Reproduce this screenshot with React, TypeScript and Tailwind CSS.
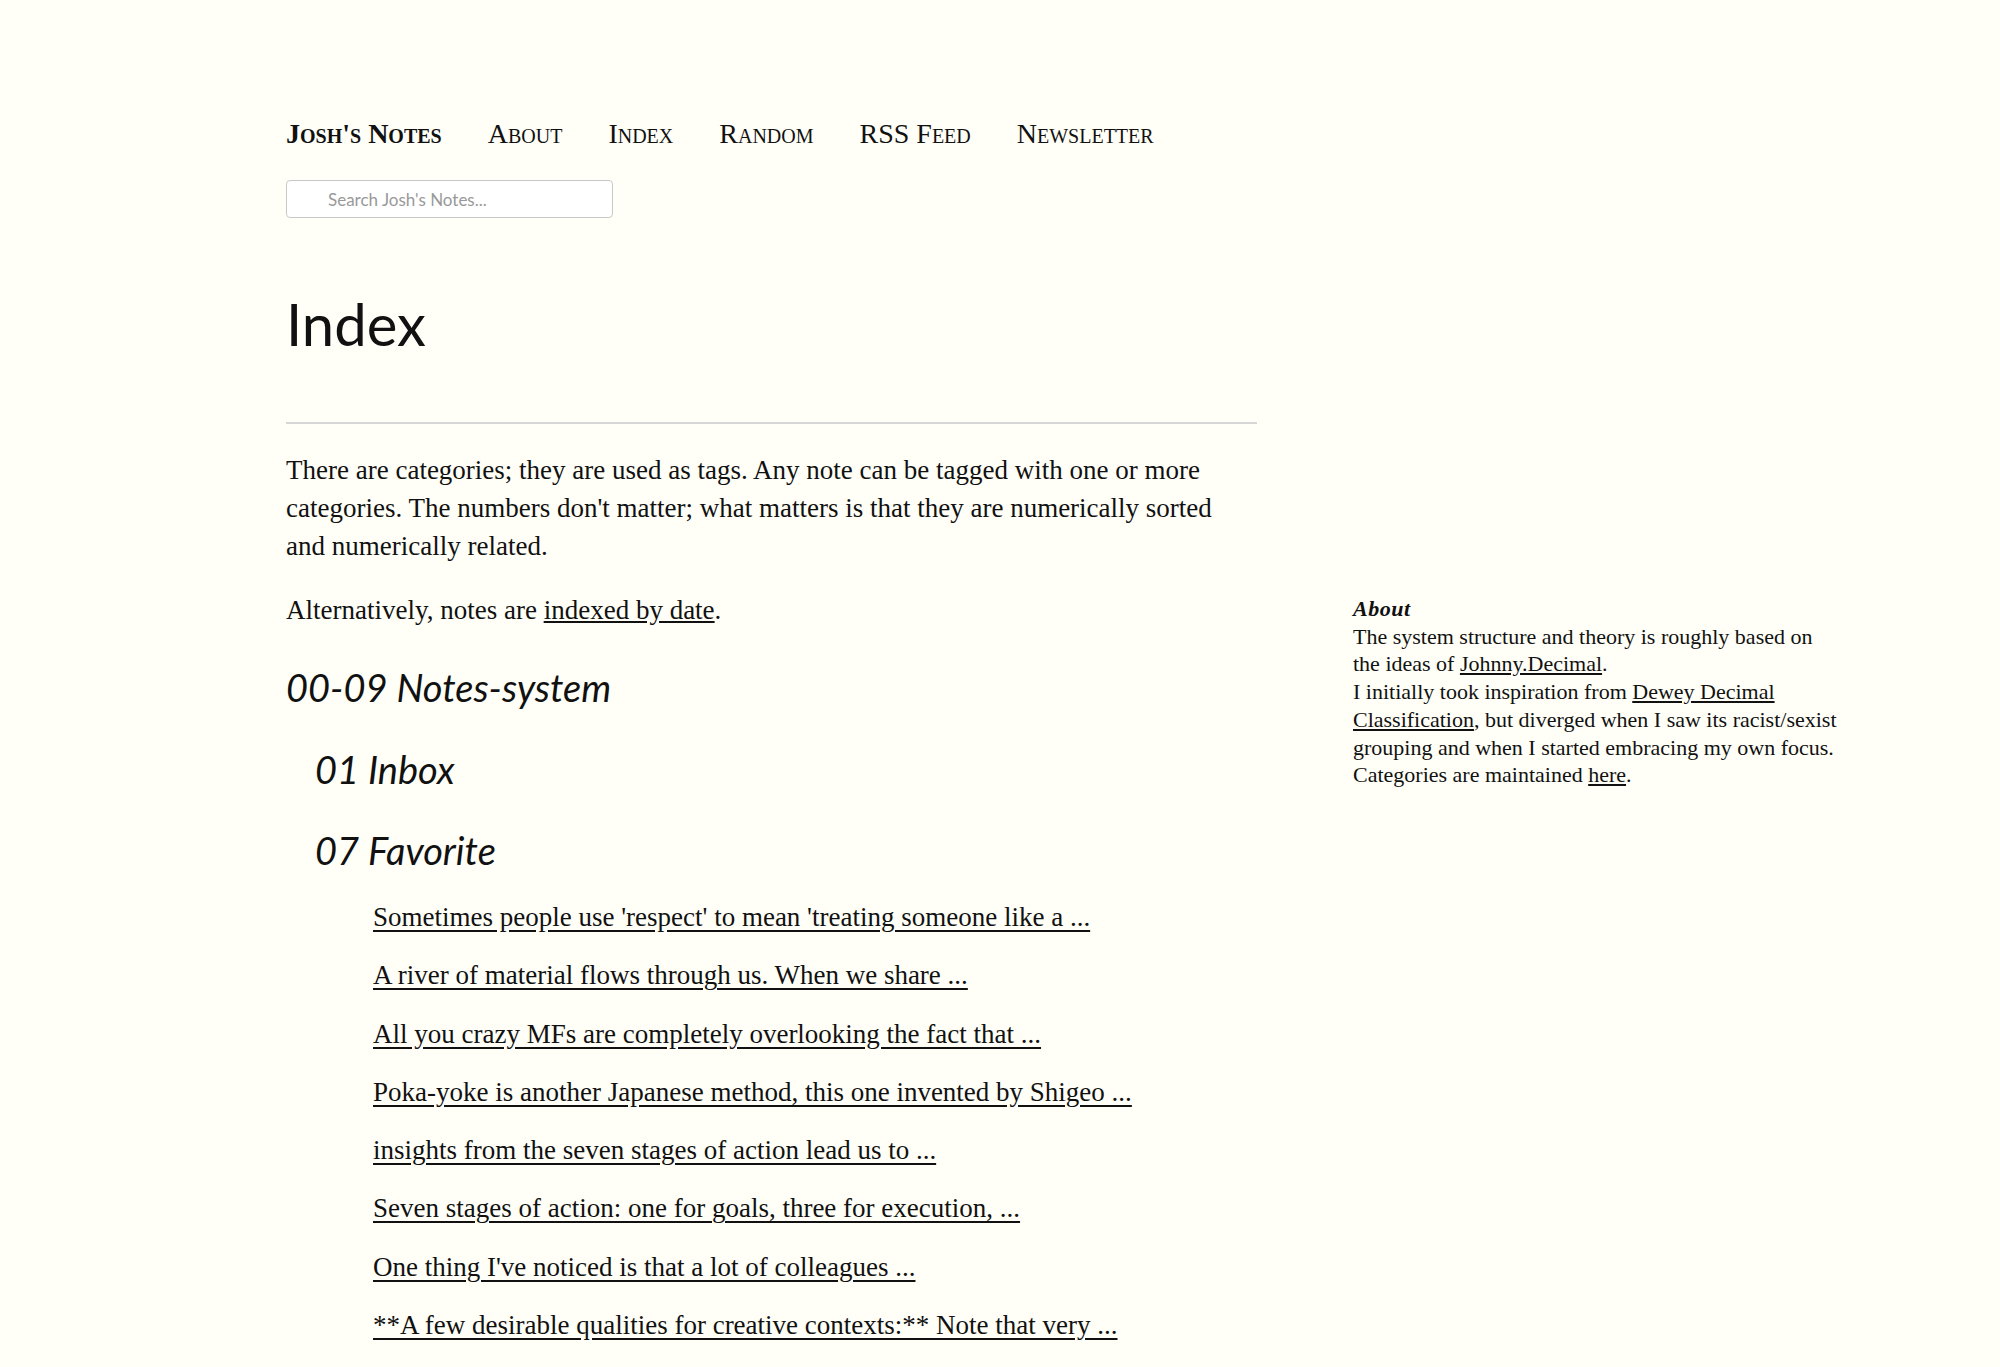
const navLinks = ["About", "Index", "Random", "RSS Feed", "Newsletter"];

const favorites = [
  "Sometimes people use 'respect' to mean 'treating someone like a ...",
  "A river of material flows through us. When we share ...",
  "All you crazy MFs are completely overlooking the fact that ...",
  "Poka-yoke is another Japanese method, this one invented by Shigeo ...",
  "insights from the seven stages of action lead us to ...",
  "Seven stages of action: one for goals, three for execution, ...",
  "One thing I've noticed is that a lot of colleagues ...",
  "**A few desirable qualities for creative contexts:** Note that very ...",
];

const serif = "font-['Liberation_Serif',serif]";
const sans = "font-['Lato','Open_Sans',sans-serif]";

function Header() {
  return (
    <header className="pt-[114px]">
      <nav className={`flex items-baseline gap-[46px] text-[28px] leading-[40px] text-[#111] [font-variant:small-caps] ${serif}`}>
        <a className="font-bold">Josh's Notes</a>
        {navLinks.map((link) => (
          <a key={link}>{link}</a>
        ))}
      </nav>
      <div className="mt-[26px]">
        <input
          type="text"
          placeholder="Search Josh's Notes..."
          className={`h-[38px] w-[327px] rounded-[4px] border border-[#c8c8c8] bg-white pl-[41px] text-[17px] text-[#111] placeholder:text-[#999] outline-none ${sans}`}
        />
      </div>
    </header>
  );
}

function Sidebar() {
  return (
    <aside className={`mt-[171px] w-[484px] text-[22px] leading-[27.7px] text-[#111] ${serif}`}>
      <p className="font-bold italic tracking-[0.5px]">About</p>
      <p>
        The system structure and theory is roughly based on the ideas of{" "}
        <a className="underline">Johnny.Decimal</a>.
        <br />I initially took inspiration from{" "}
        <a className="underline">Dewey Decimal Classification</a>, but diverged
        when I saw its racist/sexist grouping and when I started embracing my
        own focus.
        <br />
        Categories are maintained <a className="underline">here</a>.
      </p>
    </aside>
  );
}

export default function App() {
  return (
    <div className="min-h-screen bg-[#fffff8] pl-[286px] text-[#111]">
      <Header />
      <h1 className={`mt-[66px] text-[58px] leading-[80px] font-normal ${sans}`}>Index</h1>
      <hr className="mt-[58px] w-[971px] border-0 border-t-2 border-[#d6d6d4]" />
      <div className="flex gap-[96px]">
        <main className={`w-[971px] ${serif}`}>
          <p className="mt-[27px] text-[27px] leading-[38px]">
            There are categories; they are used as tags. Any note can be tagged
            with one or more categories. The numbers don't matter; what matters
            is that they are numerically sorted and numerically related.
          </p>
          <p className="mt-[26px] text-[27px] leading-[38px]">
            Alternatively, notes are <a className="underline">indexed by date</a>.
          </p>
          <h2 className={`mt-[28px] text-[38px] leading-[60px] italic ${sans}`}>00-09 Notes-system</h2>
          <h3 className={`mt-[22px] ml-[29px] text-[38px] leading-[60px] italic ${sans}`}>01 Inbox</h3>
          <h3 className={`mt-[21px] ml-[29px] text-[38px] leading-[60px] italic ${sans}`}>07 Favorite</h3>
          <ul className="mt-[18px] ml-[87px] flex flex-col gap-[19.8px] text-[27px] leading-[38.5px]">
            {favorites.map((note) => (
              <li key={note}>
                <a className="underline underline-offset-[4px]">{note}</a>
              </li>
            ))}
          </ul>
        </main>
        <Sidebar />
      </div>
    </div>
  );
}
